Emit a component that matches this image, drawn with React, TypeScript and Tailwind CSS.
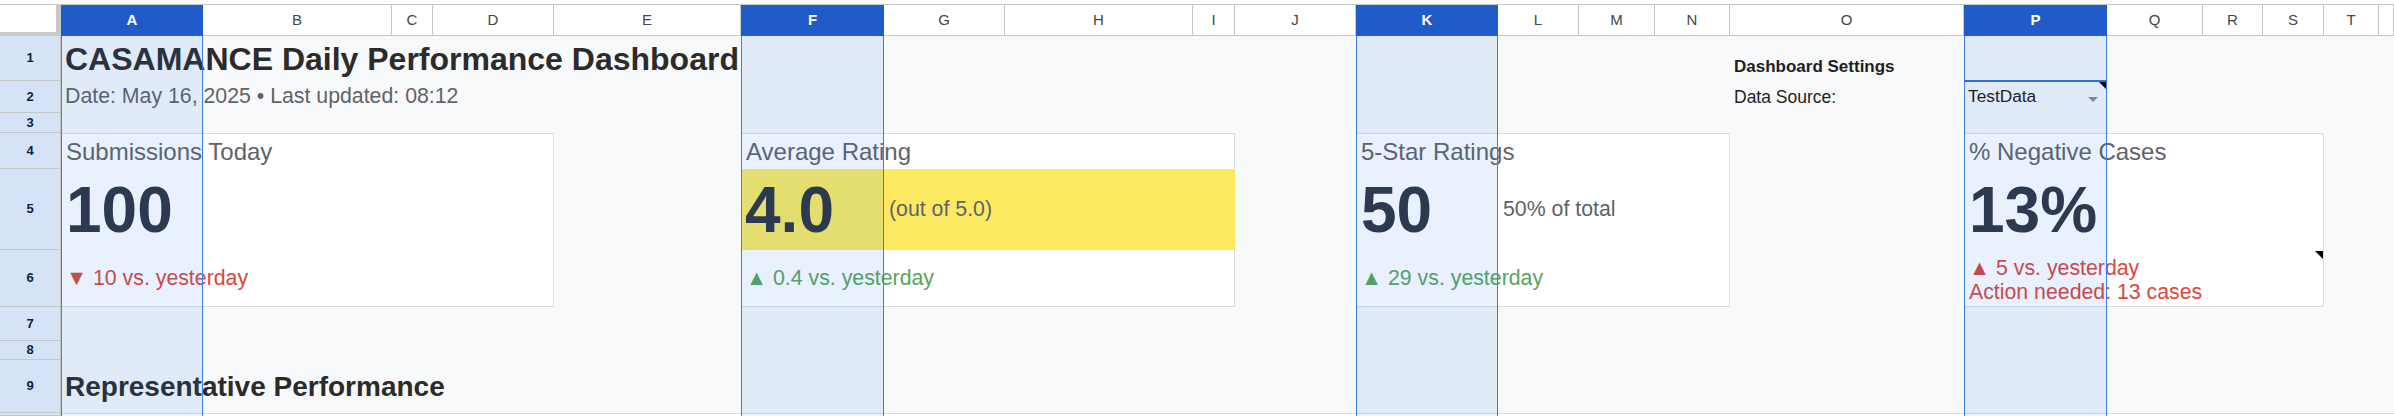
const FONT = "font-['Liberation_Sans',Arial,sans-serif]"

const columns: [string, boolean][] = [
  ['A', true],
  ['B', false],
  ['C', false],
  ['D', false],
  ['E', false],
  ['F', true],
  ['G', false],
  ['H', false],
  ['I', false],
  ['J', false],
  ['K', true],
  ['L', false],
  ['M', false],
  ['N', false],
  ['O', false],
  ['P', true],
  ['Q', false],
  ['R', false],
  ['S', false],
  ['T', false],
  ['', false],
]

const rowHeaders: [string, string][] = [
  ['row-start-2', '1'],
  ['row-start-3', '2'],
  ['row-start-4', '3'],
  ['row-start-5', '4'],
  ['row-start-6', '5'],
  ['row-start-7', '6'],
  ['row-start-8', '7'],
  ['row-start-9', '8'],
  ['row-start-10', '9'],
  ['row-start-11', ''],
]

const overlays = ['col-start-2', 'col-start-7', 'col-start-12', 'col-start-17']

const red = 'text-[#d9483b]'
const green = 'text-[#58a55c]'

export default function App() {
  return (
    <div className={`${FONT} h-[416px] w-full overflow-hidden bg-white`}>
      <div className="h-[4px] bg-white" />
      <div className="grid h-[412px] grid-cols-[61px_142px_189px_41px_121px_187px_143px_121px_188px_42px_121px_142px_81px_76px_75px_234px_143px_96px_60px_61px_55px_1fr] grid-rows-[32px_45px_32px_20px_36px_81px_57px_34px_19px_53px_1fr] bg-[#f8f9fa]">
        {/* header row */}
        <div className="border-t border-t-[#c4c7c5] border-r-[5px] border-b-[4px] border-r-[#c9c9c9] border-b-[#c9c9c9] bg-white" />
        {columns.map(([l, sel], i) =>
          sel ? (
            <div key={i} className="flex items-center justify-center border-t border-[#c4c7c5] bg-[#215bc9] text-[15px] font-bold text-white">
              {l}
            </div>
          ) : (
            <div key={i} className="flex items-center justify-center border-t border-r border-b border-[#c4c7c5] bg-white text-[15px] text-[#444746]">
              {l}
            </div>
          )
        )}

        {rowHeaders.map(([r, label]) => (
          <div key={r} className={`${r} col-start-1 flex items-center justify-center overflow-hidden border-r border-b border-[#c4c7c5] bg-[#d6e2f6] text-[13px] font-bold text-[#0b1f46]`}>
            {label}
          </div>
        ))}

        {/* row 10 edge */}
        <div className="col-start-2 col-end-23 row-start-11 border-t border-[#dadce0] bg-white" />

        {/* cards */}
        <div className="col-start-2 col-end-6 row-start-5 row-end-8 border border-[#dadce0] bg-white" />
        <div className="col-start-7 col-end-11 row-start-5 row-end-8 border border-[#dadce0] bg-white" />
        <div className="col-start-12 col-end-16 row-start-5 row-end-8 border border-[#dadce0] bg-white" />
        <div className="col-start-17 col-end-21 row-start-5 row-end-8 border border-[#dadce0] bg-white" />
        <div className="col-start-7 col-end-11 row-start-6 bg-[#fbe962]" />

        {/* title block */}
        <div className="col-start-2 col-end-12 row-start-2 flex items-center whitespace-nowrap pl-[4px] text-[32px] font-bold text-[#2b2b2b]">
          CASAMANCE Daily Performance Dashboard
        </div>
        <div className="col-start-2 col-end-12 row-start-3 flex items-center whitespace-nowrap pl-[4px] text-[21.3px] text-[#5f6368]">
          Date: May 16, 2025 • Last updated: 08:12
        </div>

        {/* settings */}
        <div className="col-start-16 row-start-2 flex items-end whitespace-nowrap pb-[2px] pl-[4px] text-[17px] font-bold text-[#1f1f1f]">
          Dashboard Settings
        </div>
        <div className="col-start-16 row-start-3 flex items-end whitespace-nowrap pb-[3px] pl-[4px] text-[17.5px] text-[#1f1f1f]">
          Data Source:
        </div>
        <div className="relative col-start-17 row-start-3 flex items-end justify-between whitespace-nowrap pb-[3px] pl-[4px] pr-[9px] text-[17.3px] text-[#1f1f1f]">
          <span>TestData</span>
          <span className="mb-[8px] h-0 w-0 border-x-[5px] border-t-[5px] border-x-transparent border-t-[#7c8797]" />
        </div>

        {/* card titles */}
        <div className="col-start-2 col-end-6 row-start-5 flex items-center whitespace-nowrap pl-[5px] pt-[2px] text-[24px] text-[#5f6368]">
          Submissions Today
        </div>
        <div className="col-start-7 col-end-11 row-start-5 flex items-center whitespace-nowrap pl-[5px] pt-[2px] text-[24px] text-[#5f6368]">
          Average Rating
        </div>
        <div className="col-start-12 col-end-16 row-start-5 flex items-center whitespace-nowrap pl-[5px] pt-[2px] text-[24px] text-[#5f6368]">
          5-Star Ratings
        </div>
        <div className="col-start-17 col-end-21 row-start-5 flex items-center whitespace-nowrap pl-[5px] pt-[2px] text-[24px] text-[#5f6368]">
          % Negative Cases
        </div>

        {/* big numbers */}
        <div className="col-start-2 row-start-6 flex items-center whitespace-nowrap pl-[5px] text-[64px] font-bold text-[#2e3440]">
          100
        </div>
        <div className="col-start-7 row-start-6 flex items-center whitespace-nowrap pl-[4px] text-[64px] font-bold text-[#2e3440]">
          4.0
        </div>
        <div className="col-start-8 col-end-11 row-start-6 flex items-center whitespace-nowrap pl-[5px] text-[21.3px] text-[#5f6368]">
          (out of 5.0)
        </div>
        <div className="col-start-12 row-start-6 flex items-center whitespace-nowrap pl-[5px] text-[64px] font-bold text-[#2e3440]">
          50
        </div>
        <div className="col-start-13 col-end-16 row-start-6 flex items-center whitespace-nowrap pl-[5px] text-[21.3px] text-[#5f6368]">
          50% of total
        </div>
        <div className="col-start-17 row-start-6 flex items-center whitespace-nowrap pl-[5px] text-[64px] font-bold text-[#2e3440]">
          13%
        </div>

        {/* deltas */}
        <div className={`col-start-2 col-end-6 row-start-7 flex items-center whitespace-nowrap pl-[5px] text-[21.3px] ${red}`}>
          ▼ 10 vs. yesterday
        </div>
        <div className={`col-start-7 col-end-11 row-start-7 flex items-center whitespace-nowrap pl-[5px] text-[21.3px] ${green}`}>
          ▲ 0.4 vs. yesterday
        </div>
        <div className={`col-start-12 col-end-16 row-start-7 flex items-center whitespace-nowrap pl-[5px] text-[21.3px] ${green}`}>
          ▲ 29 vs. yesterday
        </div>
        <div className={`col-start-17 col-end-21 row-start-7 flex flex-col justify-center whitespace-nowrap pl-[5px] pt-[2px] text-[21.3px] leading-[24px] ${red}`}>
          <span>▲ 5 vs. yesterday</span>
          <span>Action needed: 13 cases</span>
        </div>

        {/* section heading */}
        <div className="col-start-2 col-end-12 row-start-10 flex items-center whitespace-nowrap pl-[4px] text-[28px] font-bold text-[#2b2b2b]">
          Representative Performance
        </div>

        {/* column selection */}
        {overlays.map((c) => (
          <div key={c} className={`${c} row-start-2 row-end-12 border-x border-[#3b7de9] bg-[#1a73e8]/10`} />
        ))}

        {/* active cell edge + note markers */}
        <div className="col-start-17 row-start-3 relative">
          <div className="h-[2px] -mt-[1px] bg-[#2f6fe0]" />
          <span className="absolute right-[1px] top-[1px] h-0 w-0 border-l-[7px] border-t-[7px] border-l-transparent border-t-black" />
        </div>
        <div className="col-start-20 row-start-7 relative">
          <span className="absolute right-[1px] top-[1px] h-0 w-0 border-l-[8px] border-t-[8px] border-l-transparent border-t-black" />
        </div>
      </div>
    </div>
  )
}
